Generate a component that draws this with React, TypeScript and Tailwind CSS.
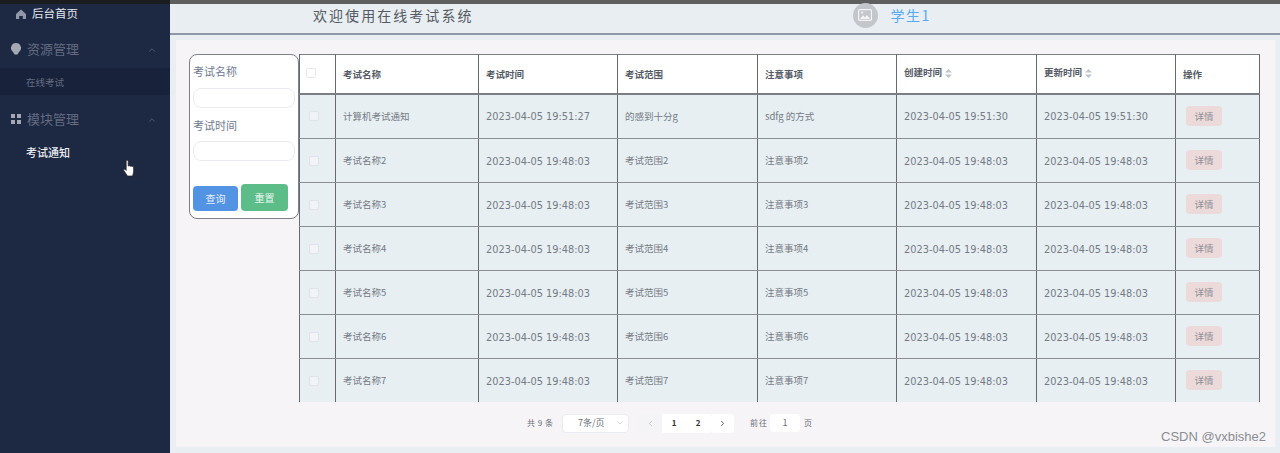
import { ChevronDown, ChevronLeft, ChevronRight, ChevronUp } from "lucide-react";

const cjk = "font-['Noto_Sans_CJK_SC','Liberation_Sans',sans-serif]";

const rows = [
  ["计算机考试通知", "2023-04-05 19:51:27", "的感到十分g", "sdfg 的方式", "2023-04-05 19:51:30", "2023-04-05 19:51:30"],
  ["考试名称2", "2023-04-05 19:48:03", "考试范围2", "注意事项2", "2023-04-05 19:48:03", "2023-04-05 19:48:03"],
  ["考试名称3", "2023-04-05 19:48:03", "考试范围3", "注意事项3", "2023-04-05 19:48:03", "2023-04-05 19:48:03"],
  ["考试名称4", "2023-04-05 19:48:03", "考试范围4", "注意事项4", "2023-04-05 19:48:03", "2023-04-05 19:48:03"],
  ["考试名称5", "2023-04-05 19:48:03", "考试范围5", "注意事项5", "2023-04-05 19:48:03", "2023-04-05 19:48:03"],
  ["考试名称6", "2023-04-05 19:48:03", "考试范围6", "注意事项6", "2023-04-05 19:48:03", "2023-04-05 19:48:03"],
  ["考试名称7", "2023-04-05 19:48:03", "考试范围7", "注意事项7", "2023-04-05 19:48:03", "2023-04-05 19:48:03"],
];

const SortIcon = () => (
  <svg width="7" height="9" viewBox="0 0 7 9" className="ml-[3px] inline-block" fill="#c0c4cc">
    <path d="M3.5 0 7 3.400H0zM0 5.600h7L3.500 9z" />
  </svg>
);

const Sidebar = () => (
  <div className="relative flex w-[170px] shrink-0 flex-col bg-[#1d2842]">
    <div className="h-1 bg-[#1a1c20]" />
    <div className="flex h-[20px] items-center pl-4 text-[11.5px] text-[#e4e7ed]">
      <svg width="10" height="10" viewBox="0 0 10 10" fill="#8f97a8" className="mr-[6px]">
        <path d="M5 .5 10 5v5H6.800V7H3.200v3H0V5z" />
      </svg>
      后台首页
    </div>
    <div className="mt-[14px] flex h-[22px] items-center pl-[11px] pr-[13px] text-[13px] text-[#636c81]">
      <svg width="10" height="12" viewBox="0 0 10 12" fill="#a3a8b2" className="mr-[6px]">
        <path d="M5 0a5 5 0 0 1 3 9L6.500 11.500h-3L2 9a5 5 0 0 1 3-9z" />
      </svg>
      资源管理
      <ChevronUp size={10} strokeWidth={1.5} className="ml-auto mt-[2px] text-[#6e778b]" />
    </div>
    <div className="mt-[8px] flex h-[27px] items-center bg-[#18223a] pl-[26px] pt-[2px] text-[9.5px] text-[#636c81]">在线考试</div>
    <div className="mt-[13px] flex h-[22px] items-center pl-[11px] pr-[13px] text-[13px] text-[#636c81]">
      <svg width="10" height="10" viewBox="0 0 10 10" fill="#a3a8b2" className="mr-[6px]">
        <path d="M0 0h4v4H0zM6 0h4v4H6zM0 6h4v4H0zM6 6h4v4H6z" />
      </svg>
      模块管理
      <ChevronUp size={10} strokeWidth={1.5} className="ml-auto mt-[2px] text-[#6e778b]" />
    </div>
    <div className="mt-[14px] pl-[26px] text-[11px] font-medium text-[#eceef2]">考试通知</div>
    <svg width="12" height="17" viewBox="0 0 12 17" className="absolute left-[123px] top-[160px]">
      <path
        d="M3.200 1.200c0-1.200 2-1.200 2 0V6h.6c.8-.4 1.400-.2 1.600.3.800-.4 1.400-.1 1.600.4.800-.3 1.600 0 1.600.9V12l-1 4H4.500L.8 10.500c-.6-1 .6-1.900 1.400-1l1 1z"
        fill="#ffffff"
        stroke="#222222"
        strokeWidth="0.7"
      />
    </svg>
  </div>
);

const FilterCard = () => (
  <div className="flex h-[165px] w-[110px] shrink-0 flex-col rounded-lg border border-[#7d8087] bg-white pl-[3px] pr-[3px]">
    <div className="mt-[8px] text-[11px] leading-[16px] text-[#6f7a90]">考试名称</div>
    <div className="mt-[9px] h-5 w-[102px] rounded-lg border border-[#e9ebf0] bg-white" />
    <div className="mt-[9px] text-[11px] leading-[16px] text-[#6f7a90]">考试时间</div>
    <div className="mt-[8px] h-5 w-[102px] rounded-lg border border-[#e9ebf0] bg-white" />
    <div className="mt-[23px] flex items-end gap-[3px]">
      <button className="flex h-[25px] w-[45px] items-center justify-center rounded bg-[#5293e4] text-[10px] text-[#e8f0fb]">查询</button>
      <button className="flex h-[27px] w-[47px] items-center justify-center rounded bg-[#5dbd89] text-[10px] text-[#e6f6ed]">重置</button>
    </div>
  </div>
);

const DataTable = () => (
  <div className="h-[348px] w-[961px] overflow-hidden">
    <table className="w-[960px] table-fixed border-collapse border-t border-[#7d8087]">
      <colgroup>
        <col className="w-[36px]" />
        <col className="w-[143px]" />
        <col className="w-[139px]" />
        <col className="w-[140px]" />
        <col className="w-[139px]" />
        <col className="w-[140px]" />
        <col className="w-[139px]" />
        <col className="w-[84px]" />
      </colgroup>
      <thead>
        <tr className="h-[39px] bg-white text-left text-[9.5px] font-bold text-[#555b66]">
          <th className="border-x border-b-2 border-x-[#666a70] border-b-[#7a7d82] pb-[1px] pl-[6px]">
            <span className="block size-[10px] rounded-[2px] border border-[#e6e8ee] bg-white" />
          </th>
          <th className="border-x border-b-2 border-x-[#666a70] border-b-[#7a7d82] pl-[7px]">考试名称</th>
          <th className="border-x border-b-2 border-x-[#666a70] border-b-[#7a7d82] pl-[7px]">考试时间</th>
          <th className="border-x border-b-2 border-x-[#666a70] border-b-[#7a7d82] pl-[7px]">考试范围</th>
          <th className="border-x border-b-2 border-x-[#666a70] border-b-[#7a7d82] pl-[7px]">注意事项</th>
          <th className="border-x border-b-2 border-x-[#666a70] border-b-[#7a7d82] pb-[3px] pl-[7px]">
            创建时间
            <SortIcon />
          </th>
          <th className="border-x border-b-2 border-x-[#666a70] border-b-[#7a7d82] pb-[3px] pl-[7px]">
            更新时间
            <SortIcon />
          </th>
          <th className="border-x border-b-2 border-x-[#666a70] border-b-[#7a7d82] pl-[7px]">操作</th>
        </tr>
      </thead>
      <tbody>
        {rows.map((row, r) => (
          <tr key={row[0]} className={r === 0 ? "h-[45px] bg-[#e7eff2] text-[9.5px] text-[#747a84]" : "h-[44px] bg-[#e7eff2] text-[9.5px] text-[#747a84]"}>
            <td className="border border-x-[#666a70] border-y-[#8b8f94] pl-[9px]">
              <span className="block size-[10px] rounded-[2px] border border-[#e0e2ec] bg-[#f1f3f7]" />
            </td>
            {row.map((cell, i) => (
              <td
                key={i}
                className={
                  i === 1 || i === 4 || i === 5
                    ? "border border-x-[#666a70] border-y-[#8b8f94] pl-[7px] pt-[3px] font-['DejaVu_Sans',sans-serif] text-[9.8px]"
                    : "border border-x-[#666a70] border-y-[#8b8f94] pl-[7px]"
                }
              >
                {cell}
              </td>
            ))}
            <td className="border border-x-[#666a70] border-y-[#8b8f94] pb-[1px] pl-[10px]">
              <span className="flex h-5 w-9 items-center justify-center rounded-sm bg-[#ecd9da] text-[9.5px] text-[#8d8f96]">详情</span>
            </td>
          </tr>
        ))}
      </tbody>
    </table>
  </div>
);

const Pagination = () => (
  <div className="mt-[11px] flex h-5 items-center whitespace-nowrap pl-[338px] text-[8px] text-[#6b6f78]">
    <span className="w-[25px] tracking-[0.5px]">共 9 条</span>
    <div className="ml-[10px] flex h-[19px] w-[67px] items-center rounded-sm border border-[#e9ebf0] bg-white pl-[15px] pr-[4px] text-[9px]">
      7条/页
      <ChevronDown size={8} className="ml-auto text-[#c0c4cc]" />
    </div>
    <div className="ml-[9px] flex h-[19px] items-center text-[#2f333a]">
      <span className="flex h-full w-6 items-center justify-center rounded-sm bg-[#f4f4f7] text-[#b4b8c0]">
        <ChevronLeft size={9} />
      </span>
      <span className="flex h-full w-6 items-center justify-center bg-white font-bold">1</span>
      <span className="flex h-full w-6 items-center justify-center bg-white font-bold">2</span>
      <span className="flex h-full w-[24px] items-center justify-center rounded-sm bg-white">
        <ChevronRight size={9} />
      </span>
    </div>
    <span className="ml-4 tracking-[1px]">前往</span>
    <div className="ml-[2px] flex h-[18px] w-[30px] items-center justify-center rounded-sm bg-white text-[9px]">1</div>
    <span className="ml-[4px]">页</span>
  </div>
);

export default function App() {
  return (
    <div className={`relative flex h-[453px] w-[1280px] overflow-hidden bg-[#e9eef3] ${cjk}`}>
      <Sidebar />
      <div className="flex min-w-0 flex-1 flex-col">
        <div className="h-1 bg-[#5f5f5f]" />
        <div className="flex h-[31px] items-center border-b-2 border-[#8e98a6] pb-[7px] pl-[143px]">
          <span className="text-[14px] tracking-[2.05px] text-[#555a60]">欢迎使用在线考试系统</span>
          <span className="ml-[379px] flex size-[25px] items-center justify-center rounded-full bg-[#c3c6cb]">
            <svg width="14" height="12" viewBox="0 0 14 12" fill="none">
              <rect x="0.600" y="0.600" width="12.800" height="10.800" rx="1" stroke="#f2f3f5" strokeWidth="1.200" />
              <path d="m2 10 3-4 2 2.500L9 6l3 4z" fill="#f2f3f5" />
              <circle cx="4.200" cy="3.600" r="1.100" fill="#f2f3f5" />
            </svg>
          </span>
          <span className="ml-[13px] text-[14px] tracking-[1.5px] text-[#56a9f5]">学生1</span>
        </div>
        <div className="ml-[6px] mt-[5px] flex h-[407px] w-[1099px] flex-col bg-[#f6f4f7] pl-[13px] pt-[14px]">
          <div className="flex">
            <FilterCard />
            <DataTable />
          </div>
          <Pagination />
        </div>
      </div>
      <span className="absolute bottom-[7px] right-[14px] font-['Liberation_Sans',sans-serif] text-[13px] text-[#8a8d92]">CSDN @vxbishe2</span>
    </div>
  );
}
